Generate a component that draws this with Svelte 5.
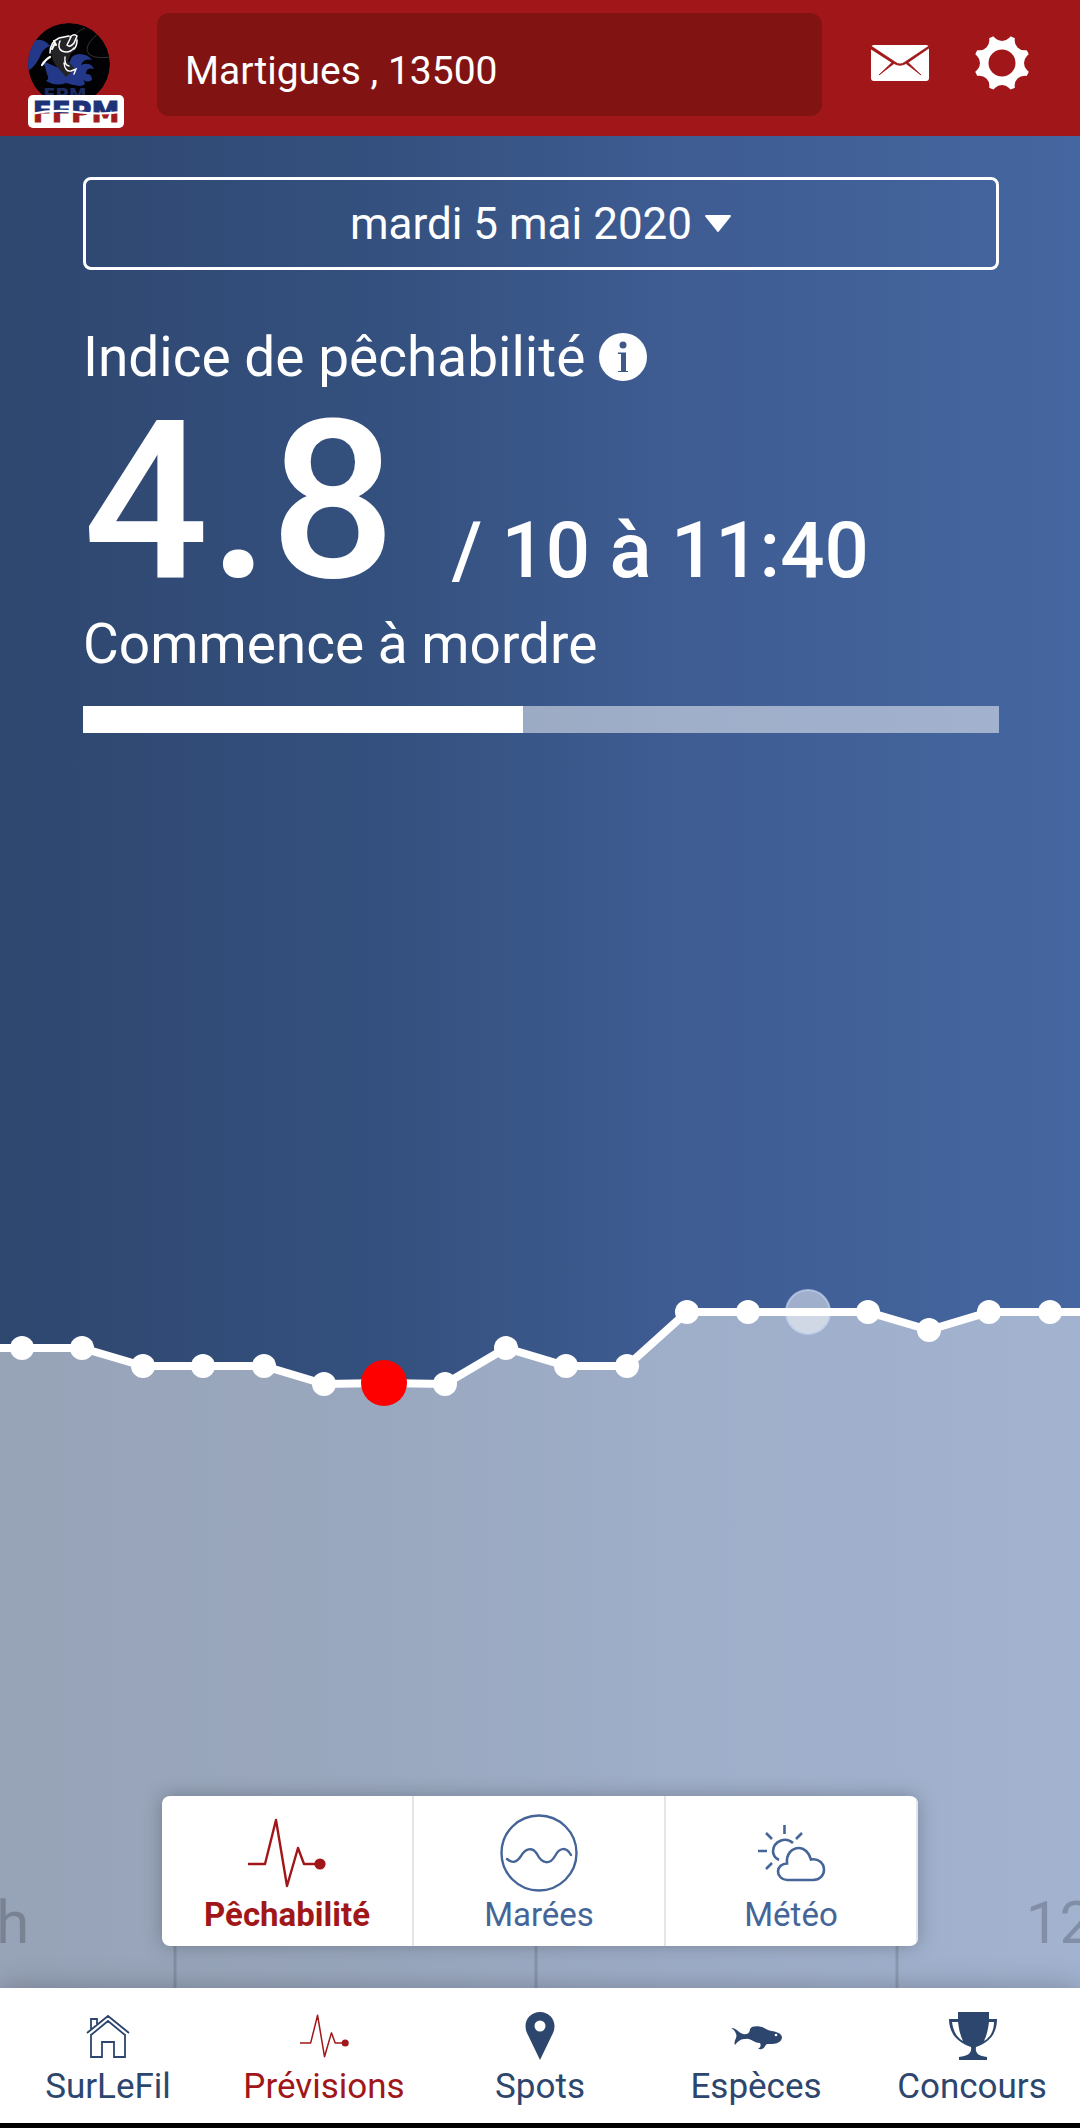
<script>
  const points = [
    [-38, 1348], [22, 1348], [82, 1348], [143, 1366], [203, 1366], [264, 1366],
    [324, 1384], [384, 1383], [445, 1384], [506, 1348], [566, 1366], [627, 1366],
    [687, 1312], [748, 1312], [808, 1312], [868, 1312], [929, 1330], [989, 1312],
    [1050, 1312], [1110, 1312]
  ].map(([x, y]) => ({ x, y: y - 1260 }));
  const selected = 7;
  const now = 14;
  const line = points.map((p) => `${p.x},${p.y}`).join(' ');
  const area = `-38,728 ${line} 1110,728`;
  const dots = points.filter((_, i) => i !== selected && i !== now);
  const score = 4.8;

  let tab = $state('fish');
  let place = $state('Martigues , 13500');
</script>

{#snippet pulse()}
  <svg class="pulse" viewBox="0 0 78 70" aria-hidden="true">
    <path d="M0 46H17L28 2L39 68L50 30L56 46H68" fill="none" stroke="currentColor" stroke-width="2.4" stroke-linejoin="round" />
    <circle cx="72" cy="46" r="5.6" fill="currentColor" />
  </svg>
{/snippet}

<div class="app">
  <header>
    <svg class="logo" viewBox="0 0 96 106" role="img" aria-label="FFPM">
      <defs>
        <clipPath id="disc"><circle cx="41" cy="41" r="41" /></clipPath>
        <linearGradient id="flag" x1="0" y1="0" x2="0" y2="1">
          <stop offset="0.52" stop-color="#1f3278" />
          <stop offset="0.52" stop-color="#a11b1e" />
        </linearGradient>
      </defs>
      <g clip-path="url(#disc)">
        <circle cx="41" cy="41" r="41" fill="#020204" />
        <path d="M3 19Q14 13 22 23Q16 25 13 31Q10 39 4 45L0 48V25Z" fill="#24388a" />
        <path d="M14 38Q20 40 26 43L38 47L42 38Q43 32 51 31Q60 31 64 37Q56 35 53 42Q62 38 66 46Q58 44 58 51Q64 50 64 57Q60 60 55 57Q60 62 52 63Q44 62 38 60Q28 64 18 58Q22 56 19 51Q18 44 14 38Z" fill="#24388a" />
        <path d="M25 19Q31 12 44 12L50 14Q51 26 43 30L40 38L47 46L38 54L31 46Q23 38 23 28Z" fill="#242426" />
        <path d="M57 5Q46 9 45 18M84 34Q60 37 59 27Q59 19 71 10" fill="none" stroke="#333" stroke-width="1" />
        <g fill="none" stroke="#fff" stroke-linecap="round">
          <path d="M22 30Q22 19 31 15L41 13" stroke-width="1.4" />
          <path d="M24 26L27 20M26 18L28 22" stroke-width="2" />
          <path d="M14 42Q18 36 22 34" stroke-width="2.2" />
          <path d="M32 18Q29 25 34 28Q41 31 46 25M43 14L39 22Q42 25 46 20L49 13Q46 10 42 14M49 17Q49 23 46 26" stroke-width="1.5" />
          <path d="M37 34Q36 42 41 43M36 40Q37 49 43 48L48 46L46 51" stroke-width="1.4" />
        </g>
        <text x="37" y="78" text-anchor="middle" class="ghost">FPM</text>
      </g>
      <rect y="72" width="96" height="33" rx="5" fill="#fff" />
      <text x="48" y="99" text-anchor="middle" class="brand" fill="url(#flag)" stroke="url(#flag)">FFPM</text>
      <path d="M3 91Q26 86 48 89T93 89" fill="none" stroke="#fff" stroke-width="2" />
    </svg>
    <input class="search" type="text" aria-label="Lieu" bind:value={place} />
    <button class="icon-btn mail" aria-label="Messages">
      <svg viewBox="0 0 58 36">
        <rect width="58" height="36" rx="3" fill="#fff" />
        <path d="M0 1L24 17Q29 21 34 17L58 1V3L37 17.5L50 30L35 18.5Q29 22 23 18.5L8 30L21 17.5L0 4Z" fill="#a11719" stroke="#a11719" stroke-width="0.8" />
      </svg>
    </button>
    <button class="icon-btn gear" aria-label="Réglages">
      <svg viewBox="-27 -27 54 54">
        <circle r="28" fill="#fff" />
        <g fill="#a11719">
          <circle r="13.500" />
          {#each [0, 45, 90, 135, 180, 225, 270, 315] as angle}
            <circle cy="-32" r="10" transform="rotate({angle})" />
          {/each}
        </g>
      </svg>
    </button>
  </header>

  <main>
    <section class="summary">
      <button class="date">
        <span>mardi 5 mai 2020</span>
        <svg viewBox="0 0 28 18" aria-hidden="true"><path d="M2 1H26L14 16Z" fill="#fff" stroke="#fff" stroke-width="2" stroke-linejoin="round" /></svg>
      </button>
      <h1>
        Indice de pêchabilité
        <button class="info" aria-label="Informations">
          <svg viewBox="0 0 48 48">
            <circle cx="24" cy="24" r="24" fill="#fff" />
            <g fill="#3c5987">
              <circle cx="24" cy="12" r="3.500" />
              <path d="M19 19.500H27V38H29V39H19V38H22V21H19Z" />
            </g>
          </svg>
        </button>
      </h1>
      <p class="score"><strong>{score}</strong><span>/ 10 à 11:40</span></p>
      <p class="status">Commence à mordre</p>
      <div class="meter" role="progressbar" aria-label="Indice" aria-valuemin="0" aria-valuemax="10" aria-valuenow={score}>
        <div class="fill" style="width: {score * 10}%"></div>
      </div>
    </section>

    <section class="forecast">
      <svg class="chart" viewBox="0 0 1080 728" role="img" aria-label="Courbe de pêchabilité">
        <polygon points={area} fill="#fff" fill-opacity="0.5" />
        <g stroke="#000" stroke-opacity="0.13" stroke-width="3">
          {#each [175, 536, 897] as x}<line x1={x} x2={x} y1="640" y2="728" />{/each}
        </g>
        <text class="hour" x="-4" y="683">6h</text>
        <text class="hour" x="1076" y="683">12h</text>
        <circle cx={points[now].x} cy={points[now].y} r="22" fill="#fff" fill-opacity="0.5" stroke="#c3d3ef" stroke-opacity="0.7" stroke-width="2" />
        <polyline points={line} fill="none" stroke="#fff" stroke-width="8" stroke-linejoin="round" />
        {#each dots as p}<circle cx={p.x} cy={p.y} r="12" fill="#fff" />{/each}
        <circle cx={points[selected].x} cy={points[selected].y} r="23" fill="#f00" />
      </svg>

      <div class="tabs">
        <button class:active={tab === 'fish'} onclick={() => (tab = 'fish')}>
          {@render pulse()}
          <span>Pêchabilité</span>
        </button>
        <button class:active={tab === 'tides'} onclick={() => (tab = 'tides')}>
          <svg viewBox="0 0 78 78" aria-hidden="true" fill="none" stroke="currentColor" stroke-width="2.4" stroke-linecap="round">
            <circle cx="39" cy="39" r="37.500" />
            <path d="M7 45C13 50 17 48 21 42C25 35 32 32 37 40C42 50 50 51 55 42C59 34 66 32 71 41" />
          </svg>
          <span>Marées</span>
        </button>
        <button class:active={tab === 'weather'} onclick={() => (tab = 'weather')}>
          <svg viewBox="0 0 78 78" aria-hidden="true" fill="none" stroke="currentColor" stroke-width="2.600">
            <path d="M32.500 11V20M14 19L20 25M50 19L44 25M6 37H15M14 55L20 49" />
            <path d="M41 29A12 12 0 0 0 21 37Q21 43 27 46" />
            <path d="M35 66H61C68 66 72 61 72 56C72 49 66 44 59 45.500C57 38 52 34 47 34C40 34 34 40 35 49.500C30 49.500 26 53 26 57.500S30 66 35 66Z" />
          </svg>
          <span>Météo</span>
        </button>
      </div>
    </section>
  </main>

  <nav>
    <a href="#fil">
      <svg viewBox="0 0 52 52" aria-hidden="true" fill="none" stroke="currentColor" stroke-width="1.800">
        <path d="M9 24V47H20V32H32V47H43V24M5 23L26 6L47 23M9 25L26 11L43 25M9 19V9H15V15" />
      </svg>
      <span>SurLeFil</span>
    </a>
    <a href="#previsions" class="current">
      {@render pulse()}
      <span>Prévisions</span>
    </a>
    <a href="#spots">
      <svg viewBox="0 0 52 52" aria-hidden="true">
        <path fill="currentColor" fill-rule="evenodd" d="M26 2C17.500 2 11.500 8.500 11.500 16Q11.500 20 13 23L26 50L39 23Q40.500 20 40.500 16C40.500 8.500 34.500 2 26 2ZM26 10.500A5.500 5.500 0 1 1 26 21.500A5.500 5.500 0 1 1 26 10.500Z" />
      </svg>
      <span>Spots</span>
    </a>
    <a href="#especes">
      <svg viewBox="0 0 52 52" aria-hidden="true">
        <path fill="currentColor" d="M1 18C7 18 9 23 13 24C17 25 20 23 20 19C22 15 32 16 36 19C41 22 51 21 52 27C52 34 43 34 37 34C34 36 35 40 28 39C31 37 31 35 30 33C23 33 21 28 16 29C11 29 9 30 5 35C3 31 8 27 6 24Q5 20 1 18Z" />
        <circle cx="46" cy="25" r="1.300" fill="#fff" />
      </svg>
      <span>Espèces</span>
    </a>
    <a href="#concours">
      <svg viewBox="0 0 52 52" aria-hidden="true">
        <path fill="currentColor" fill-rule="evenodd" d="M12 2H43V9H51C51 22 45 32 30 37C29 43 32 46 41 47V50H13V47C22 46 26 43 25 37C10 32 3 22 3 9H12ZM12 12H6C7 20 10 27 17 31C14 25 13 19 12 12ZM43 12C42 19 41 25 38 31C45 27 48 20 48 12Z" />
      </svg>
      <span>Concours</span>
    </a>
  </nav>
</div>

<style>
  :global(body) {
    margin: 0;
    font-family: Roboto, 'Liberation Sans', sans-serif;
  }
  .app {
    min-height: 100vh;
    box-sizing: border-box;
    display: flex;
    flex-direction: column;
    border-bottom: 5px solid #000;
    color: #fff;
    overflow: hidden;
  }
  button {
    font: inherit;
    color: inherit;
    background: none;
    border: 0;
    padding: 0;
    cursor: pointer;
  }
  svg {
    display: block;
    flex: none;
  }
  header {
    display: flex;
    align-items: flex-start;
    padding: 13px 51px 20px 28px;
    background: #a11719;
  }
  .logo {
    width: 96px;
    height: 106px;
    margin: 10px 33px -14px 0;
  }
  .brand {
    font: bold 28px 'DejaVu Sans', sans-serif;
  }
  .ghost {
    font: bold 18px 'DejaVu Sans', sans-serif;
    fill: #1c2b60;
  }
  .search {
    flex: 1;
    min-width: 0;
    height: 103px;
    box-sizing: border-box;
    padding: 13px 28px 0;
    border: 0;
    border-radius: 12px;
    background: #811413;
    color: #fff;
    font: 39px Roboto, sans-serif;
  }
  .mail {
    width: 58px;
    margin: 32px 46px 0 49px;
  }
  .gear {
    width: 54px;
    margin-top: 23px;
  }
  main {
    flex: 1;
    display: flex;
    flex-direction: column;
    background: linear-gradient(90deg, #2e476f 0%, #34507e 35%, #3e5c92 62%, #4566a0 100%);
  }
  .summary {
    padding: 41px 81px 0 83px;
  }
  .date {
    width: 100%;
    height: 93px;
    display: flex;
    align-items: center;
    justify-content: center;
    gap: 12px;
    border: 3px solid #fff;
    border-radius: 8px;
    font-size: 44px;
  }
  .date svg {
    width: 28px;
    height: 18px;
  }
  h1 {
    display: flex;
    align-items: center;
    gap: 14px;
    margin: 55px 0 3px;
    font-size: 55px;
    line-height: 64px;
    font-weight: 400;
  }
  .info svg {
    width: 48px;
    height: 48px;
  }
  .score {
    margin: 0;
    display: flex;
    align-items: baseline;
    gap: 56px;
    font-weight: 500;
    font-size: 78px;
    line-height: 80px;
  }
  .score strong {
    font-size: 221px;
    line-height: 220px;
    font-weight: 500;
  }
  .status {
    margin: 0 0 30px;
    font-size: 55px;
    line-height: 64px;
  }
  .meter {
    height: 27px;
    background: rgba(255, 255, 255, 0.5);
  }
  .fill {
    height: 100%;
    background: #fff;
  }
  .forecast {
    position: relative;
    margin-top: auto;
  }
  .chart {
    width: 100%;
    height: auto;
  }
  .hour {
    font-size: 60px;
    text-anchor: middle;
    fill: #000;
    fill-opacity: 0.2;
  }
  .tabs {
    position: absolute;
    left: 15%;
    right: 15%;
    bottom: 42px;
    display: grid;
    grid-template-columns: repeat(3, 1fr);
    border-radius: 8px;
    overflow: hidden;
    background: #fff;
    box-shadow: 0 0 20px rgba(0, 0, 0, 0.25);
  }
  .tabs button {
    height: 150px;
    display: flex;
    flex-direction: column;
    align-items: center;
    padding-top: 18px;
    border-right: 2px solid #e3e5e8;
    color: #456598;
    font-size: 33px;
    line-height: 40px;
  }
  .tabs svg {
    width: 78px;
    height: 78px;
    margin-bottom: 3px;
  }
  .tabs .active {
    color: #a11719;
    font-weight: 700;
  }
  nav {
    position: relative;
    display: grid;
    grid-template-columns: repeat(5, 1fr);
    background: #fff;
    box-shadow: 0 0 28px rgba(0, 0, 0, 0.25);
  }
  nav a {
    height: 135px;
    box-sizing: border-box;
    display: flex;
    flex-direction: column;
    align-items: center;
    padding-top: 22px;
    color: #2d466e;
    font-size: 35px;
    line-height: 40px;
    text-decoration: none;
  }
  nav svg {
    width: 52px;
    height: 52px;
    margin-bottom: 5px;
  }
  nav .pulse {
    width: 49px;
  }
  nav .current {
    color: #a11719;
  }
</style>
